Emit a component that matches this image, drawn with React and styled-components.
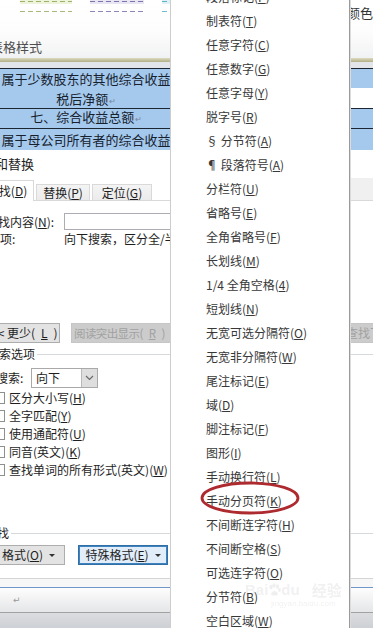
import React from "react";
import styled, { createGlobalStyle } from "styled-components";

const FONT = `"Noto Sans CJK SC", "Noto Sans", sans-serif`;

const Global = createGlobalStyle`
  *, *::before, *::after { box-sizing: border-box; }
  html, body { margin: 0; padding: 0; background: #fff; }
  body { font-family: ${FONT}; }
`;

const Screen = styled.div`
  position: relative;
  width: 373px;
  height: 628px;
  overflow: hidden;
  background: #fff;
  display: flex;
  flex-direction: column;
  font-family: ${FONT};
  color: #1e1e1e;
`;

/* ---------- style gallery ---------- */
const Gallery = styled.div`
  flex: none;
  height: 58px;
  display: flex;
  background: linear-gradient(#ffffff 0%, #fdfdfd 55%, #f1f2f3 100%);
`;
const GalleryMain = styled.div`
  flex: 1;
  display: flex;
  flex-direction: column;
  justify-content: space-between;
  padding-bottom: 3px;
  overflow: hidden;
`;
const SwatchRow = styled.div`
  display: flex;
  gap: 18px;
  padding-left: 20px;
`;
const Swatch = styled.div`
  flex: none;
  width: ${(p) => p.$w}px;
  height: 12px;
  display: flex;
  flex-direction: column;
  justify-content: space-between;
  padding-top: 1px;
  background: linear-gradient(${(p) => p.$tint} 0 4px, transparent 4px);
`;
const Dash = styled.div`
  height: 1px;
  background: repeating-linear-gradient(90deg, ${(p) => p.$c} 0 5px, transparent 5px 8px);
`;
const GalleryLabel = styled.div`
  margin-left: -10px;
  font-size: 13px;
  line-height: 16px;
  color: #4e4e4e;
  white-space: nowrap;
`;
const GalleryAside = styled.div`
  flex: none;
  width: 26px;
  padding-top: 5px;
  font-size: 13px;
  line-height: 16px;
  color: #333;
  white-space: nowrap;
  overflow: hidden;
`;
const OliveRule = styled.div`
  flex: none;
  height: 4px;
  background: linear-gradient(#dcdac0, #b3b085);
`;
const GreyGap = styled.div`
  flex: none;
  height: 6px;
  background: #e2e6ea;
`;

/* ---------- table ---------- */
const Table = styled.div`
  flex: none;
  display: grid;
  grid-template-columns: 172px 1fr;
  grid-template-rows: 19px 20px 20px 22px;
  border-top: 1px solid #1c2632;
`;
const Cell = styled.div`
  grid-column: ${(p) => p.$col};
  grid-row: ${(p) => p.$row};
  background: ${(p) => (p.$blank ? "#ffffff" : "#a4c9ed")};
  border-top: ${(p) => (p.$rule ? "1px solid #1c2632" : "none")};
  display: flex;
  flex-direction: column;
  align-items: center;
  justify-content: ${(p) => (p.$top ? "flex-start" : "center")};
  font-size: 13px;
  line-height: 19.5px;
  color: #17212d;
  white-space: nowrap;
`;
const ParaMark = styled.span`
  font-family: "DejaVu Sans", sans-serif;
  font-size: 8px;
  color: #7487a0;
  margin-left: 1px;
`;

/* ---------- dialog ---------- */
const Dialog = styled.div`
  flex: none;
  height: 428px;
  overflow: hidden;
  display: flex;
  flex-direction: column;
  background: #fff;
  font-size: 12px;
  line-height: 16px;
  color: #1e1e1e;
`;
const DialogTitle = styled.div`
  flex: none;
  height: 27px;
  display: flex;
  align-items: center;
  font-size: 13px;
  white-space: nowrap;
`;
const Shift = styled.span`
  margin-left: ${(p) => p.$ml}px;
  white-space: nowrap;
`;
const TabStrip = styled.div`
  flex: none;
  height: 24px;
  display: flex;
  align-items: flex-end;
  gap: 2px;
  border-bottom: 1px solid #d9d9d9;
`;
const Tab = styled.div`
  flex: none;
  width: ${(p) => p.$w}px;
  height: ${(p) => (p.$active ? 21 : 16)}px;
  margin-left: ${(p) => p.$ml || 0}px;
  margin-bottom: ${(p) => (p.$active ? -1 : 0)}px;
  display: flex;
  align-items: center;
  justify-content: center;
  white-space: nowrap;
  border: 1px solid #d9d9d9;
  border-bottom: none;
  background: ${(p) => (p.$active ? "#ffffff" : "linear-gradient(#f4f4f4, #ebebeb)")};
`;
const TabTail = styled.div`
  margin-left: auto;
  width: 24px;
  height: 22px;
  background: #f0f0f0;
`;
const FieldRow = styled.div`
  flex: none;
  display: grid;
  grid-template-columns: ${(p) => p.$label}px 1fr;
  align-items: center;
  height: ${(p) => p.$h}px;
  margin-top: ${(p) => p.$mt}px;
  white-space: nowrap;
`;
const TextBox = styled.div`
  width: 272px;
  height: 17px;
  border: 1px solid #abadb3;
  background: #fff;
`;
const ButtonRow = styled.div`
  flex: none;
  display: flex;
  align-items: center;
  height: 20px;
  margin-top: ${(p) => p.$mt}px;
`;
const Btn = styled.div`
  flex: none;
  width: ${(p) => p.$w}px;
  height: 20px;
  margin-left: ${(p) => (p.$push ? "auto" : `${p.$ml || 0}px`)};
  margin-right: ${(p) => p.$mr || 0}px;
  display: flex;
  align-items: center;
  justify-content: ${(p) => (p.$start ? "flex-start" : "center")};
  gap: 6px;
  padding-left: ${(p) => (p.$start ? p.$pad : 0)}px;
  font-size: ${(p) => p.$fs || 12}px;
  letter-spacing: ${(p) => p.$tight || 0}px;
  white-space: nowrap;
  border: 1px solid ${(p) => (p.$focus ? "#2f6fa5" : p.$disabled ? "#c6c6c6" : "#adadad")};
  box-shadow: ${(p) => (p.$focus ? "inset 0 0 0 1px #3f82bd" : "none")};
  background: ${(p) => (p.$disabled ? "#cccccc" : p.$focus ? "#e1edf8" : "#e3e3e3")};
  color: ${(p) => (p.$disabled ? "#a1a1a1" : "#1e1e1e")};
`;
const Caret = styled.span`
  width: 0;
  height: 0;
  border-left: 3px solid transparent;
  border-right: 3px solid transparent;
  border-top: 3px solid #333;
`;
const GroupHead = styled.div`
  flex: none;
  display: flex;
  align-items: center;
  height: 16px;
  margin-top: ${(p) => p.$mt}px;
  white-space: nowrap;
`;
const GroupLine = styled.div`
  flex: 1;
  height: 1px;
  margin-left: 2px;
  background: #d6d9dc;
`;
const Select = styled.div`
  width: 67px;
  height: 20px;
  display: flex;
  border: 1px solid #a9a9a9;
  background: #fff;
`;
const SelectText = styled.span`
  flex: 1;
  padding-left: 4px;
  line-height: 18px;
`;
const SelectArrow = styled.span`
  width: 16px;
  display: flex;
  align-items: center;
  justify-content: center;
  background: #dedede;
  border-left: 1px solid #b9b9b9;
`;
const CheckList = styled.div`
  flex: none;
  margin-top: 1px;
  display: flex;
  flex-direction: column;
`;
const CheckRow = styled.div`
  height: 18px;
  display: flex;
  align-items: center;
  gap: 4px;
  margin-left: -7px;
  white-space: nowrap;
`;
const Box = styled.span`
  flex: none;
  width: 12px;
  height: 12px;
  border: 1px solid #8e8f8f;
  background: #fff;
`;
const Key = styled.span`
  text-decoration: underline;
  text-underline-offset: 1px;
`;

/* ---------- word document strip ---------- */
const Doc = styled.div`
  flex: none;
  height: 50px;
  display: flex;
  flex-direction: column;
`;
const DocStrip = styled.div`
  height: 9px;
  border-top: 1px solid #d4d4d4;
  background: #f7f7f7;
`;
const DocPage = styled.div`
  height: 25px;
  border-top: 1px solid #6f97c9;
  background: linear-gradient(#fdfdfd, #e5e6e8);
  display: flex;
  align-items: center;
  padding-left: 13px;
  font-family: "DejaVu Sans", sans-serif;
  font-size: 9px;
  color: #9a9a9a;
`;
const DocStatus = styled.div`
  flex: 1;
  border-top: 1px solid #a2a2a2;
  background: linear-gradient(#dcdde0, #cdd0d4);
`;

/* ---------- popup menu (overlay) ---------- */
const Menu = styled.div`
  position: absolute;
  top: 0;
  left: 170px;
  width: 180px;
  height: 100%;
  overflow: hidden;
  background: #fff;
  border-left: 1px solid #cdcdcd;
  border-right: 1px solid #9a9a9a;
  box-shadow: 1px 0 0 #dcdcdc;
`;
const MenuList = styled.ul`
  list-style: none;
  margin: -16px 0 0;
  padding: 0;
`;
const MenuItem = styled.li`
  height: 24px;
  display: flex;
  align-items: center;
  padding-left: 35px;
  font-size: 12px;
  color: #383838;
  white-space: nowrap;
`;
const Ring = styled.svg`
  position: absolute;
  left: 200px;
  top: 481px;
  width: 100px;
  height: 34px;
  pointer-events: none;
`;
const Watermark = styled.div`
  position: absolute;
  left: 245px;
  top: 581px;
  pointer-events: none;
  display: flex;
  flex-direction: column;
  align-items: center;
  color: rgba(110, 110, 110, 0.11);
  font-family: "Liberation Sans", sans-serif;
  font-weight: bold;
`;
const MarkLine = styled.div`
  display: flex;
  align-items: center;
  font-size: 15px;
  line-height: 18px;
`;
const MarkCn = styled.span`
  margin-left: 12px;
  font-family: ${FONT};
  font-size: 15px;
`;
const MarkSub = styled.div`
  font-size: 8px;
  line-height: 9px;
  font-weight: normal;
  margin-left: 20px;
`;

const MENU = [
  ["段落标记", "P"], ["制表符", "T"], ["任意字符", "C"], ["任意数字", "G"],
  ["任意字母", "Y"], ["脱字号", "R"], ["§ 分节符", "A"], ["¶ 段落符号", "A"],
  ["分栏符", "U"], ["省略号", "E"], ["全角省略号", "F"], ["长划线", "M"],
  ["1/4 全角空格", "4"], ["短划线", "N"], ["无宽可选分隔符", "O"], ["无宽非分隔符", "W"],
  ["尾注标记", "E"], ["域", "D"], ["脚注标记", "F"], ["图形", "I"],
  ["手动换行符", "L"], ["手动分页符", "K"], ["不间断连字符", "H"], ["不间断空格", "S"],
  ["可选连字符", "O"], ["分节符", "B"], ["空白区域", "W"],
];

const CHECKS = [
  ["区分大小写", "H"], ["全字匹配", "Y"], ["使用通配符", "U"],
  ["同音(英文)", "K"], ["查找单词的所有形式(英文)", "W"],
];

const Acc = ({ text, k }) => (
  <>
    {text}(<Key>{k}</Key>)
  </>
);

export default function App() {
  return (
    <>
      <Global />
      <Screen>
        <Gallery>
          <GalleryMain>
            <SwatchRow>
              <Swatch $w={52} $tint="#eef4dc">
                <Dash $c="#9fb26a" />
                <Dash $c="#a7b77a" />
              </Swatch>
              <Swatch $w={54} $tint="#e9e6f3">
                <Dash $c="#7f74aa" />
                <Dash $c="#8d86b6" />
              </Swatch>
              <Swatch $w={40} $tint="#dff1f6">
                <Dash $c="#5fb3c9" />
                <Dash $c="#6fbcd0" />
              </Swatch>
            </SwatchRow>
            <GalleryLabel>表格样式</GalleryLabel>
          </GalleryMain>
          <GalleryAside>颜色</GalleryAside>
        </Gallery>
        <OliveRule />
        <GreyGap />

        <Table>
          <Cell $col="1" $row="1 / span 2" $top>
            <span>属于少数股东的其他综合收益</span>
            <span>
              税后净额<ParaMark>↵</ParaMark>
            </span>
          </Cell>
          <Cell $col="2" $row="1" />
          <Cell $col="2" $row="2" $blank />
          <Cell $col="1" $row="3" $rule>
            <span>
              七、综合收益总额<ParaMark>↵</ParaMark>
            </span>
          </Cell>
          <Cell $col="2" $row="3" $rule />
          <Cell $col="1" $row="4" $rule>
            <span>属于母公司所有者的综合收益</span>
          </Cell>
          <Cell $col="2" $row="4" $rule />
        </Table>

        <Dialog>
          <DialogTitle>
            <Shift $ml={-31}>查找和替换</Shift>
          </DialogTitle>
          <TabStrip>
            <Tab $active $w={54} $ml={-20}>
              <Acc text="查找" k="D" />
            </Tab>
            <Tab $w={54}>
              <Acc text="替换" k="P" />
            </Tab>
            <Tab $w={60}>
              <Acc text="定位" k="G" />
            </Tab>
            <TabTail />
          </TabStrip>
          <FieldRow $label={64} $h={17} $mt={12}>
            <Shift $ml={-14}>
              <Acc text="查找内容" k="N" />:
            </Shift>
            <TextBox />
          </FieldRow>
          <FieldRow $label={64} $h={16} $mt={1}>
            <Shift $ml={-12}>选项:</Shift>
            <span>向下搜索，区分全/半角</span>
          </FieldRow>

          <ButtonRow $mt={76}>
            <Btn $w={74} $ml={-14} $start $pad={4}>
              &lt;&lt; 更少(<Key>L</Key>)
            </Btn>
            <Btn $w={100} $ml={11} $start $pad={2} $fs={11.5} $tight={-0.6} $disabled>
              阅读突出显示(<Key>R</Key>)
            </Btn>
            <Btn $w={90} $push $mr={-57} $start $pad={5} $disabled>
              查找下一处(<Key>F</Key>)
            </Btn>
          </ButtonRow>

          <GroupHead $mt={3}>
            <Shift $ml={-13}>搜索选项</Shift>
            <GroupLine />
          </GroupHead>
          <FieldRow $label={31} $h={21} $mt={5}>
            <Shift $ml={-4}>搜索:</Shift>
            <Select>
              <SelectText>向下</SelectText>
              <SelectArrow>
                <svg width="9" height="6" viewBox="0 0 9 6">
                  <polyline points="1,1 4.5,4.5 8,1" fill="none" stroke="#6a6a6a" strokeWidth="1.2" />
                </svg>
              </SelectArrow>
            </Select>
          </FieldRow>
          <CheckList>
            {CHECKS.map(([t, k]) => (
              <CheckRow key={t}>
                <Box />
                <span>
                  <Acc text={t} k={k} />
                </span>
              </CheckRow>
            ))}
          </CheckList>

          <GroupHead $mt={46}>
            <Shift $ml={-15}>查找</Shift>
            <GroupLine />
          </GroupHead>
          <ButtonRow $mt={4}>
            <Btn $w={73} $ml={-8}>
              <span>
                格式(<Key>O</Key>)
              </span>
              <Caret />
            </Btn>
            <Btn $w={90} $ml={13} $focus>
              <span>
                特殊格式(<Key>E</Key>)
              </span>
              <Caret />
            </Btn>
          </ButtonRow>
        </Dialog>

        <Doc>
          <DocStrip />
          <DocPage>↵</DocPage>
          <DocStatus />
        </Doc>

        <Menu>
          <MenuList>
            {MENU.map(([t, k], i) => (
              <MenuItem key={i}>
                <Acc text={t} k={k} />
              </MenuItem>
            ))}
          </MenuList>
        </Menu>

        <Ring viewBox="0 0 100 34">
          <ellipse cx="50" cy="17" rx="48" ry="15" fill="none" stroke="#ad2a2f" strokeWidth="2.8" />
        </Ring>

        <Watermark>
          <MarkLine>
            <span>Bai</span>
            <svg width="13" height="14" viewBox="0 0 13 14">
              <g fill="currentColor">
                <ellipse cx="3" cy="4" rx="1.6" ry="2.2" />
                <ellipse cx="6" cy="2.5" rx="1.6" ry="2.2" />
                <ellipse cx="9.5" cy="3.5" rx="1.6" ry="2.2" />
                <ellipse cx="11.5" cy="7" rx="1.4" ry="1.9" />
                <path d="M3 11 C4 7 9 7 10 11 C10 13 3 13 3 11 Z" />
              </g>
            </svg>
            <span>du</span>
            <MarkCn>经验</MarkCn>
          </MarkLine>
          <MarkSub>jingyan.baidu.com</MarkSub>
        </Watermark>
      </Screen>
    </>
  );
}
